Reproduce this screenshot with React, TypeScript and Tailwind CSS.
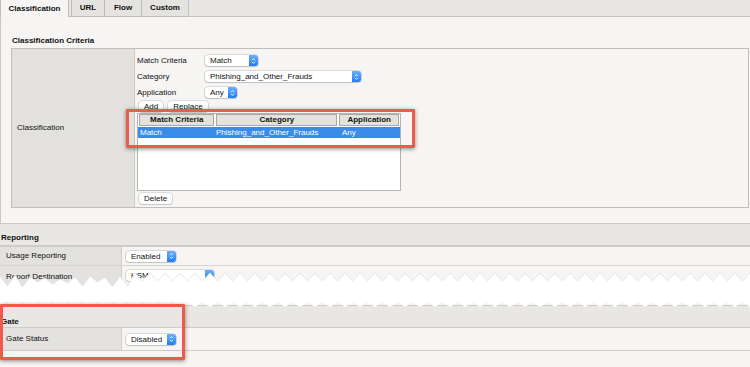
import React from 'react';

function Stepper() {
    return (
        <span className="flex w-[9px] shrink-0 items-center justify-center rounded-r-[3px] bg-gradient-to-b from-[#69b0fb] to-[#1f7bf2]">
            <svg width="5" height="8" viewBox="0 0 5 8">
                <path d="M1 3.2 L2.5 1.6 L4 3.2 M1 4.8 L2.5 6.4 L4 4.8" stroke="white" strokeWidth="0.9" fill="none" />
            </svg>
        </span>
    );
}

function Select({ value, width }: { value: string; width: string }) {
    return (
        <div className={`flex h-[11px] rounded-[3px] bg-white shadow-[0_0_0_0.6px_rgba(0,0,0,0.22),0_1px_1px_rgba(0,0,0,0.12)] ${width}`}>
            <span className="flex-1 truncate pl-[5px] text-[8px] leading-[11px]">{value}</span>
            <Stepper />
        </div>
    );
}

function Btn({ label }: { label: string }) {
    return (
        <div className="h-[11px] rounded-[3px] bg-white px-[5px] text-[8px] leading-[11px] shadow-[0_0_0_0.6px_rgba(0,0,0,0.2),0_1px_1px_rgba(0,0,0,0.1)]">
            {label}
        </div>
    );
}

function Tear() {
    // top edge, left part a bit ragged and lower like a real tear
    const jitter = [3, 5, 2, 6, 4, 1, 5, 3, 6, 2, 4, 5, 3, 1, 4, 6, 3, 5];
    const top: string[] = [];
    let i = 0;
    for (let x = 0; x <= 750; x += 7.5) {
        const peak = i % 2 === 0;
        const j = x < 135 ? jitter[i % jitter.length] : 0;
        top.push(`${x} ${(peak ? 2 : 10) + j}`);
        i++;
    }
    const bottom: string[] = [];
    i = 0;
    for (let x = 750; x >= 0; x -= 7.5) {
        bottom.push(`${x} ${i % 2 === 0 ? 36 : 31}`);
        i++;
    }
    const d = `M${top.join(' L')} L${bottom.join(' L')} Z`;
    const edge = `M${top.join(' L')}`;
    return (
        <svg width="750" height="38" viewBox="0 0 750 38" className="relative z-10 -mt-[17px] block">
            <path d={d} fill="white" />
            <path d={edge} stroke="#e2e1de" strokeWidth="0.8" fill="none" />
        </svg>
    );
}

export default function App() {
    const tabs = [
        { name: 'URL', w: 'w-[33px]' },
        { name: 'Flow', w: 'w-[37px]' },
        { name: 'Custom', w: 'w-[47px]' },
    ];

    return (
        <div className="h-[367px] w-[750px] overflow-hidden bg-[#f6f5f3] font-['Liberation_Sans',Arial,sans-serif] text-[8px] text-[#111]">
            {/* tabs */}
            <div className="flex h-[17px] bg-[#e8e7e3]">
                <div className="flex w-[69px] items-center justify-center border-x border-[#bcbbb7] bg-[#f6f5f3] font-bold">
                    Classification
                </div>
                <div className="w-[2px] border-b border-[#c4c3bf]" />
                {tabs.map((t) => (
                    <div key={t.name} className={`flex items-center justify-center border-b border-l border-[#bcbbb7] bg-[#e4e3df] font-bold ${t.w}`}>
                        {t.name}
                    </div>
                ))}
                <div className="flex-1 border-b border-l border-[#c4c3bf]" />
            </div>

            {/* classification panel */}
            <div className="border-b border-l border-[#c9c8c4] pb-[15px] pt-[18px]">
                <div className="pl-[11px] font-bold leading-[11px]">Classification Criteria</div>
                <div className="ml-[10px] mr-[1px] mt-[2px] flex h-[160px] border border-[#bfbebb]">
                    <div className="flex w-[123px] items-center border-r border-[#c9c8c4] bg-[#e2e1dd] pl-[5px]">
                        Classification
                    </div>
                    <div className="relative flex-1 pl-[2px] pt-[6px]">
                        <div className="flex flex-col gap-[5px]">
                            <div className="flex h-[11px] items-center">
                                <span className="w-[68px]">Match Criteria</span>
                                <Select value="Match" width="w-[53px]" />
                            </div>
                            <div className="flex h-[11px] items-center">
                                <span className="w-[68px]">Category</span>
                                <Select value="Phishing_and_Other_Frauds" width="w-[156px]" />
                            </div>
                            <div className="flex h-[11px] items-center">
                                <span className="w-[68px]">Application</span>
                                <Select value="Any" width="w-[32px]" />
                            </div>
                        </div>
                        <div className="ml-[2px] mt-[3px] flex gap-[5px]">
                            <Btn label="Add" />
                            <Btn label="Replace" />
                        </div>
                        <div className="mt-[1px] h-[78px] w-[264px] border border-[#b5b4b0] bg-white">
                            <div className="flex h-[12px] gap-[2px] px-[1px]">
                                <div className="flex w-[76px] items-center justify-center border border-[#a9a8a4] bg-[#e3e2de] font-bold">Match Criteria</div>
                                <div className="flex w-[122px] items-center justify-center border border-[#a9a8a4] bg-[#e3e2de] font-bold">Category</div>
                                <div className="flex w-[60px] items-center justify-center border border-[#a9a8a4] bg-[#e3e2de] font-bold">Application</div>
                            </div>
                            <div className="mt-[1px] flex h-[11px] items-center bg-[#3a8ceb] text-white">
                                <span className="w-[78px] pl-[2px]">Match</span>
                                <span className="w-[126px]">Phishing_and_Other_Frauds</span>
                                <span>Any</span>
                            </div>
                        </div>
                        <div className="ml-[2px] mt-[2px] flex">
                            <Btn label="Delete" />
                        </div>
                        {/* highlight */}
                        <div className="absolute left-[-9px] top-[60px] h-[39px] w-[289px] rounded-[1px] border-[3px] border-[#ef5a4b] shadow-[0_1px_4px_rgba(0,0,0,0.45)]" />
                    </div>
                </div>
            </div>

            {/* reporting */}
            <div className="flex h-[23px] items-end border-b-2 border-[#cdccc8] bg-[#e8e7e3] pb-[1px] pl-[1px] font-bold">
                Reporting
            </div>
            <div className="flex h-[19px] border-b border-[#d6d5d1]">
                <div className="flex w-[122px] items-center border-r border-[#d0cfcb] bg-[#e3e2de] pl-[6px]">Usage Reporting</div>
                <div className="flex items-center pl-[4px]">
                    <Select value="Enabled" width="w-[50px]" />
                </div>
            </div>
            <div className="flex h-[22px]">
                <div className="flex w-[122px] items-start border-r border-[#d0cfcb] bg-[#e3e2de] pl-[6px] pt-[5px]">Report Destination</div>
                <div className="flex items-start pl-[4px] pt-[4px]">
                    <Select value="HSM" width="w-[88px]" />
                </div>
            </div>
            <Tear />

            {/* gate */}
            <div className="relative -mt-[4px]">
                <div className="flex h-[23px] items-end border-y border-[#cdccc8] bg-[#e8e7e3] pl-[1px] font-bold leading-[10px]">
                    Gate
                </div>
                <div className="flex h-[23px] border-b border-[#cdccc8]">
                    <div className="flex w-[122px] items-center border-r border-[#d0cfcb] bg-[#e3e2de] pl-[6px]">Gate Status</div>
                    <div className="flex items-center pl-[4px]">
                        <Select value="Disabled" width="w-[50px]" />
                    </div>
                </div>
                <div className="absolute left-0 top-[-1px] z-20 h-[56px] w-[185px] rounded-[1px] border-[3px] border-[#ef5a4b] shadow-[0_1px_4px_rgba(0,0,0,0.45)]" />
            </div>
        </div>
    );
}
